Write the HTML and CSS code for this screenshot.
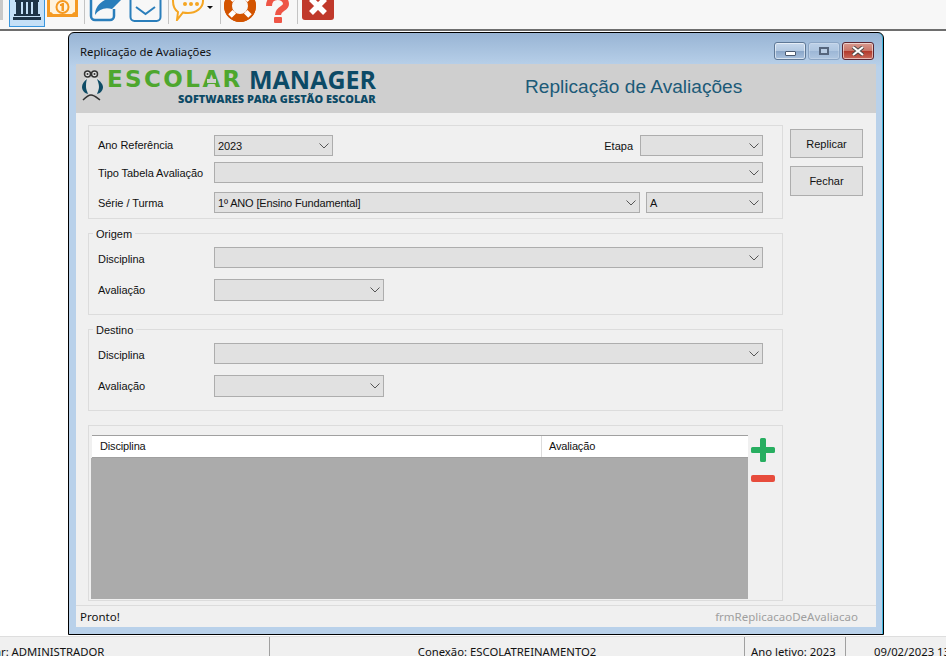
FILE: index.html
```html
<!DOCTYPE html>
<html lang="pt-BR">
<head>
<meta charset="utf-8">
<title>Replicação de Avaliações</title>
<link rel="stylesheet" href="styles.css">
</head>
<body>
<div class="app">
  <header class="toolbar">
    <span class="tb-stub"></span>
    <span class="tb-btn tb-selected">
      <svg width="28" height="20" viewBox="0 0 28 20"><path fill="#1f3447" d="M2 0h24v2H2zM3 2h5v12H3zM10 2h3v12h-3zM15 2h3v12h-3zM20 2h5v12h-5zM1 14h26v2H1zM0 17h28v3H0z"/></svg>
    </span>
    <svg class="tb-money" width="31" height="17" viewBox="0 0 31 17"><path fill="#f59a23" d="M0 0h31v17H0z"/><path fill="#fff3dd" d="M3-1h25v13a4 4 0 0 0-3 2H6a4 4 0 0 0-3-2z"/><circle cx="15.500" cy="7" r="6" fill="#fff3dd" stroke="#f59a23" stroke-width="2"/><path fill="#f59a23" d="M14.500 3h2.500v8h-2.500zM13 4h2v2h-2z"/></svg>
    <span class="tb-sep tb-sep-a"></span>
    <svg class="tb-share" width="33" height="22" viewBox="0 0 33 22"><path fill="none" stroke="#2a7ebb" stroke-width="2.500" d="M25 9v7a4 4 0 0 1-4 4H6a4 4 0 0 1-4-4V0"/><path fill="#2a7ebb" d="M6 15C6 7 11 2 18-1h15L23 9C16 7 10 9 6 15z"/></svg>
    <svg class="tb-mail" width="33" height="22" viewBox="0 0 33 22"><rect x="1.500" y="-6" width="30" height="27" rx="4" fill="none" stroke="#2a7ebb" stroke-width="2"/><path fill="none" stroke="#2a7ebb" stroke-width="2" d="M7 7l9.500 7L26 7"/></svg>
    <span class="tb-sep tb-sep-b"></span>
    <svg class="tb-chat" width="33" height="21" viewBox="0 0 33 21"><path fill="none" stroke="#f5a623" stroke-width="2" d="M16-11c8 0 15 5 15 12s-7 12-15 12c-2 0-3 0-5-.5L5 20l1-8C3 10 1 6 1 1c0-7 7-12 15-12z"/><circle cx="13" cy="4" r="2" fill="#f5a623"/><circle cx="19" cy="4" r="2" fill="#f5a623"/><circle cx="25" cy="4" r="2" fill="#f5a623"/></svg>
    <svg class="tb-caret" width="6" height="3" viewBox="0 0 6 3"><path fill="#111" d="M0 0h6L3 3z"/></svg>
    <span class="tb-sep tb-sep-c"></span>
    <svg class="tb-life" width="32" height="23" viewBox="0 0 32 23"><circle cx="16" cy="6" r="12" fill="none" stroke="#d35400" stroke-width="8"/><circle cx="16" cy="6" r="15" fill="none" stroke="#d35400" stroke-width="2"/><path stroke="#fff" stroke-width="5" d="M21.700 11.700l4.300 4.300M10.300 11.700L6 16M21.700.300L26-4M10.300.300L6-4"/></svg>
    <svg class="tb-help" width="23" height="23" viewBox="0 0 23 23"><path fill="none" stroke="#ee5546" stroke-width="6" d="M3 6c0-6 4-9 8.500-9S20 0 20 4c0 5-8 4-8 11"/><rect x="8" y="17" width="8" height="6" rx="1" fill="#ee5546"/></svg>
    <span class="tb-sep tb-sep-d"></span>
    <svg class="tb-close" width="32" height="20" viewBox="0 0 32 20"><rect y="-6" width="32" height="26" rx="3" fill="#c0392b"/><path stroke="#fff" stroke-width="5.500" d="M9-1l14 14M23-1L9 13"/></svg>
  </header>

  <main class="desktop">
    <section class="window">
      <div class="titlebar">
        <span class="win-title">Replicação de Avaliações</span>
        <div class="win-controls">
          <span class="win-btn"><i class="glyph-min"></i></span>
          <span class="win-btn win-btn-dim"><i class="glyph-max"></i></span>
          <span class="win-btn win-btn-close">
            <svg width="14" height="10" viewBox="0 0 14 10"><path stroke="#4a4a4a" stroke-width="4" d="M2 1l10 8M12 1L2 9"/><path stroke="#fff" stroke-width="2.200" d="M2 1l10 8M12 1L2 9"/></svg>
          </span>
        </div>
      </div>

      <div class="client">
        <div class="banner">
          <div class="logo">
            <svg class="owl" width="24" height="34" viewBox="0 0 24 34">
              <circle cx="6.500" cy="5" r="3" fill="#e4e4e4" stroke="#333" stroke-width="1.500"/>
              <circle cx="13.500" cy="5" r="3" fill="#e4e4e4" stroke="#333" stroke-width="1.500"/>
              <circle cx="6.500" cy="5" r="1" fill="#333"/><circle cx="13.500" cy="5" r="1" fill="#333"/>
              <path fill="#dedede" d="M4 9h14l2 8-4 8H8L3 17z"/>
              <path fill="#0f4c66" d="M6 10C3 12 1 15 1 18s2 6 6 7c-1-3-2-5-2-7 0-3 0-5 1-8zM16 10c3 2 6 5 6 8s-2 6-6 7c1-3 2-5 2-7 0-3-1-5-2-8z"/>
              <path fill="none" stroke="#333" stroke-width="1.500" d="M2 31c3-3 5-5 8-5s5 2 9 5"/>
            </svg>
            <div class="logo-text">
              <div class="logo-main"><span class="logo-green">ESCOL<span class="logo-a">A</span>R</span><span class="logo-dark">MANAGER</span></div>
              <div class="logo-sub">SOFTWARES PARA GESTÃO ESCOLAR</div>
            </div>
          </div>
          <h1 class="banner-title">Replicação de Avaliações</h1>
        </div>

        <div class="body">
          <div class="groups">
            <div class="group group-filter">
              <div class="row">
                <label class="lbl">Ano Referência</label>
                <div class="sel w-ano"><span>2023</span><svg class="chev" width="10" height="6" viewBox="0 0 10 6"><path fill="none" stroke="#555" d="M.5.500L5 5 9.500.500"/></svg></div>
                <label class="lbl-etapa">Etapa</label>
                <div class="sel w-etapa"><span></span><svg class="chev" width="10" height="6" viewBox="0 0 10 6"><path fill="none" stroke="#555" d="M.5.500L5 5 9.500.500"/></svg></div>
              </div>
              <div class="row row-tipo">
                <label class="lbl">Tipo Tabela Avaliação</label>
                <div class="sel w-full"><span></span><svg class="chev" width="10" height="6" viewBox="0 0 10 6"><path fill="none" stroke="#555" d="M.5.500L5 5 9.500.500"/></svg></div>
              </div>
              <div class="row row-serie">
                <label class="lbl">Série / Turma</label>
                <div class="sel w-serie"><span>1º ANO [Ensino Fundamental]</span><svg class="chev" width="10" height="6" viewBox="0 0 10 6"><path fill="none" stroke="#555" d="M.5.500L5 5 9.500.500"/></svg></div>
                <div class="sel w-turma"><span>A</span><svg class="chev" width="10" height="6" viewBox="0 0 10 6"><path fill="none" stroke="#555" d="M.5.500L5 5 9.500.500"/></svg></div>
              </div>
            </div>

            <div class="group group-pick">
              <span class="legend">Origem</span>
              <div class="row row-disc">
                <label class="lbl">Disciplina</label>
                <div class="sel w-full"><span></span><svg class="chev" width="10" height="6" viewBox="0 0 10 6"><path fill="none" stroke="#555" d="M.5.500L5 5 9.500.500"/></svg></div>
              </div>
              <div class="row row-aval">
                <label class="lbl">Avaliação</label>
                <div class="sel w-aval"><span></span><svg class="chev" width="10" height="6" viewBox="0 0 10 6"><path fill="none" stroke="#555" d="M.5.500L5 5 9.500.500"/></svg></div>
              </div>
            </div>

            <div class="group group-pick">
              <span class="legend">Destino</span>
              <div class="row row-disc">
                <label class="lbl">Disciplina</label>
                <div class="sel w-full"><span></span><svg class="chev" width="10" height="6" viewBox="0 0 10 6"><path fill="none" stroke="#555" d="M.5.500L5 5 9.500.500"/></svg></div>
              </div>
              <div class="row row-aval">
                <label class="lbl">Avaliação</label>
                <div class="sel w-aval"><span></span><svg class="chev" width="10" height="6" viewBox="0 0 10 6"><path fill="none" stroke="#555" d="M.5.500L5 5 9.500.500"/></svg></div>
              </div>
            </div>

            <div class="group group-grid">
              <div class="table">
                <div class="thead">
                  <div class="th th-disc">Disciplina</div>
                  <div class="th th-aval">Avaliação</div>
                </div>
                <div class="tbody"></div>
              </div>
              <div class="grid-actions">
                <svg width="24" height="24" viewBox="0 0 24 24"><path fill="#27ae60" d="M9 1.500A1.500 1.500 0 0 1 10.500 0h3A1.500 1.500 0 0 1 15 1.500V9h7.500A1.500 1.500 0 0 1 24 10.500v3a1.500 1.500 0 0 1-1.500 1.500H15v7.500a1.500 1.500 0 0 1-1.500 1.500h-3A1.500 1.500 0 0 1 9 22.500V15H1.500A1.500 1.500 0 0 1 0 13.500v-3A1.500 1.500 0 0 1 1.500 9H9z"/></svg>
                <svg width="24" height="7" viewBox="0 0 24 7"><rect width="24" height="7" rx="2" fill="#e74c3c"/></svg>
              </div>
            </div>
          </div>

          <div class="actions">
            <button class="btn btn-replicar" type="button">Replicar</button>
            <button class="btn btn-fechar" type="button">Fechar</button>
          </div>
        </div>

        <footer class="win-status">
          <span>Pronto!</span>
          <span class="form-name">frmReplicacaoDeAvaliacao</span>
        </footer>
      </div>
    </section>
  </main>

  <footer class="statusbar">
    <div class="st st-user">Usuar: ADMINISTRADOR</div>
    <div class="st st-conn">Conexão: ESCOLATREINAMENTO2</div>
    <div class="st st-year">Ano letivo: 2023</div>
    <div class="st st-date">09/02/2023 13:45</div>
  </footer>
</div>
</body>
</html>
```

FILE: styles.css
```css
* { box-sizing: border-box; }
html, body { margin: 0; padding: 0; height: 656px; overflow: hidden; background: #fff; }
body { font-family: "Liberation Sans", Arial, sans-serif; font-size: 11px; color: #111; }

.app { display: flex; flex-direction: column; width: 946px; height: 656px; overflow: hidden; }

/* application toolbar */
.toolbar { position: relative; flex: 0 0 31px; display: flex; align-items: flex-start; background: #f7f7f7; border-bottom: 2px solid #6e6e6e; overflow: hidden; }
.toolbar svg { flex: none; }
.tb-stub { width: 3px; height: 20px; background: #c9c9c9; margin-right: 6px; }
.tb-btn { width: 36px; height: 27px; display: flex; justify-content: center; }
.tb-selected { background: #c5e0f7; border: 1px solid #3a96dd; border-top: 0; }
.tb-money { margin-left: 2px; }
.tb-sep { width: 1px; height: 24px; background: #c4c4c4; }
.tb-sep-a { margin-left: 6px; }
.tb-share { margin-left: 4px; }
.tb-mail { margin-left: 7px; }
.tb-sep-b { margin-left: 6px; }
.tb-chat { margin-left: 3px; }
.tb-caret { margin: 6px 0 0 2px; }
.tb-sep-c { margin-left: 7px; }
.tb-life { margin-left: 3px; }
.tb-help { margin-left: 10px; }
.tb-sep-d { margin-left: 8px; }
.tb-close { margin-left: 4px; }

/* desktop and window */
.desktop { position: relative; flex: 1 1 auto; background: #fff; }
.window { position: absolute; left: 68px; top: 1px; width: 816px; height: 603px; border: 1px solid #000; border-radius: 6px 6px 0 0; background: linear-gradient(#98b4d4 0, #b9d1ea 34px, #b9d1ea 100%); box-shadow: inset -1px 0 0 #3fb4dc, inset 0 -1px 0 #b9d1ea; display: flex; flex-direction: column; padding: 0 7px 7px; }
.titlebar { flex: 0 0 31px; display: flex; align-items: flex-start; justify-content: space-between; }
.win-title { margin: 12px 0 0 4px; font-family: "Noto Sans", sans-serif; font-size: 11.300px; line-height: 14px; color: #111; }
.win-controls { display: flex; gap: 2px; margin: 9px 2px 0 0; }
.win-btn { width: 32px; height: 18px; display: flex; align-items: center; justify-content: center; border: 1px solid #5e7896; border-radius: 3px; background: linear-gradient(#c7d8ec 0, #b3c9e2 48%, #8aa6c8 52%, #a9c2df 100%); box-shadow: inset 0 0 0 1px rgba(255,255,255,.55); }
.win-btn-dim { border-color: #8ba5c4; background: linear-gradient(#bcd0e8 0, #afc6e0 48%, #9db7d6 52%, #afc6e0 100%); box-shadow: inset 0 0 0 1px rgba(255,255,255,.2); }
.win-btn-close { border-color: #5c2530; background: linear-gradient(#d99a8f 0, #c9766a 48%, #b23a2c 52%, #c96a5c 100%); }
.glyph-min { display: block; width: 11px; height: 5px; margin-top: 4px; background: #fff; border: 1px solid #4a5a70; border-radius: 1px; }
.glyph-max { display: block; width: 10px; height: 8px; background: #b9cde4; border: 2px solid #55657c; }

.client { flex: 1 1 auto; display: flex; flex-direction: column; background: #f0f0f0; min-height: 0; }

/* banner */
.banner { position: relative; flex: 0 0 49px; background: #cfcfcf; }
.logo { display: flex; padding: 5px 0 0 5px; }
.owl { flex: none; }
.logo-text { margin: -3px 0 0 2px; }
.logo-main { display: flex; font-size: 24px; line-height: 26px; height: 26px; white-space: nowrap; }
.logo-green { display: block; flex: 0 0 142px; font-family: "DejaVu Sans", sans-serif; font-size: 23px; color: #4ea72e; font-weight: 700; letter-spacing: 2.400px; }
.logo-a { position: relative; display: inline-block; }
.logo-a::after { content: ""; position: absolute; left: 5px; right: 7px; top: 13px; height: 4px; background: #cfcfcf; }
.logo-dark { color: #0c4a66; font-family: "Open Sans", sans-serif; font-weight: 700; font-size: 25px; letter-spacing: 0; }
.logo-sub { margin: 0 0 0 71px; font-family: "Open Sans", sans-serif; font-size: 10.900px; line-height: 14px; font-weight: 800; color: #0c4a66; white-space: nowrap; }
.banner-title { position: absolute; left: 449px; top: 11px; margin: 0; font-family: "Liberation Sans", sans-serif; font-size: 19.100px; line-height: 24px; font-weight: 400; color: #1c5a78; white-space: nowrap; }

/* body */
.body { flex: 1 1 auto; display: flex; align-items: flex-start; padding: 12px 0 0 12px; min-height: 0; }
.groups { width: 695px; display: flex; flex-direction: column; gap: 14px; }
.group { position: relative; border: 1px solid #dcdcdc; padding-left: 9px; padding-right: 19px; }
.group-filter { height: 94px; padding-top: 9px; }
.group-pick { height: 82px; padding-top: 13px; }
.group-grid { height: 176px; padding: 9px 0 0 3px; display: flex; }
.legend { position: absolute; left: 4px; top: -6px; padding: 0 3px; background: #f0f0f0; line-height: 13px; font-size: 11px; }

.row { display: flex; align-items: center; }
.row-tipo { margin-top: 6px; }
.row-serie { margin-top: 9px; }
.row-aval { margin-top: 11px; }
.lbl { flex: 0 0 116px; line-height: 13px; white-space: nowrap; letter-spacing: -.05px; }
.row-tipo .lbl, .row-serie .lbl { padding-top: 2px; }
.row-disc .lbl { padding-top: 4px; }
.lbl-etapa { margin-left: auto; margin-right: 7px; }

.sel { height: 21px; display: flex; align-items: center; justify-content: space-between; padding: 0 3px 0 3px; background: #e1e1e1; border: 1px solid #adadad; font-size: 11px; letter-spacing: -.15px; }
.row-aval .sel { height: 22px; }
.w-ano { width: 119px; }
.w-etapa { width: 123px; }
.w-full { width: 549px; }
.w-serie { width: 426px; }
.w-turma { width: 117px; margin-left: 6px; }
.w-aval { width: 170px; }
.chev { flex: none; }

/* data grid */
.table { width: 656px; height: 164px; display: flex; flex-direction: column; }
.thead { flex: 0 0 23px; display: flex; background: #fff; border-top: 1px solid #a0a0a0; border-bottom: 1px solid #a0a0a0; }
.th { line-height: 21px; padding-left: 8px; font-size: 11px; letter-spacing: -.15px; }
.th-disc { width: 450px; border-right: 1px solid #dcdcdc; }
.th-aval { flex: 1; padding-left: 7px; }
.tbody { flex: 1; margin-left: -1px; background: #ababab; }
.grid-actions { display: flex; flex-direction: column; align-items: center; gap: 13px; margin: 3px 0 0 3px; }

/* side buttons */
.actions { display: flex; flex-direction: column; margin: 4px 0 0 7px; }
.btn { width: 73px; font: inherit; font-size: 11px; color: #111; background: #e1e1e1; border: 1px solid #adadad; padding: 0; }
.btn-replicar { height: 29px; }
.btn-fechar { height: 30px; margin-top: 8px; }

/* window status */
.win-status { flex: 0 0 22px; display: flex; align-items: center; justify-content: space-between; padding: 0 18px 0 4px; border-top: 1px solid #dcdcdc; background: #f0f0f0; font-family: "Noto Sans", sans-serif; font-size: 11.500px; }
.form-name { color: #9f9f9f; }

/* application status bar */
.statusbar { position: relative; flex: 0 0 20px; display: flex; background: #f0f0f0; border-top: 1px solid #dedede; font-family: "Noto Sans", sans-serif; font-size: 11.300px; white-space: nowrap; overflow: hidden; }
.st { flex: none; height: 30px; padding-top: 7px; line-height: 16px; }
.st-user { width: 270px; border-right: 1px solid #a0a0a0; text-indent: -26px; }
.st-conn { width: 475px; text-align: center; border-right: 1px solid #a0a0a0; }
.st-year { width: 101px; padding-left: 6px; border-right: 1px solid #a0a0a0; }
.st-date { padding-left: 28px; }
```
